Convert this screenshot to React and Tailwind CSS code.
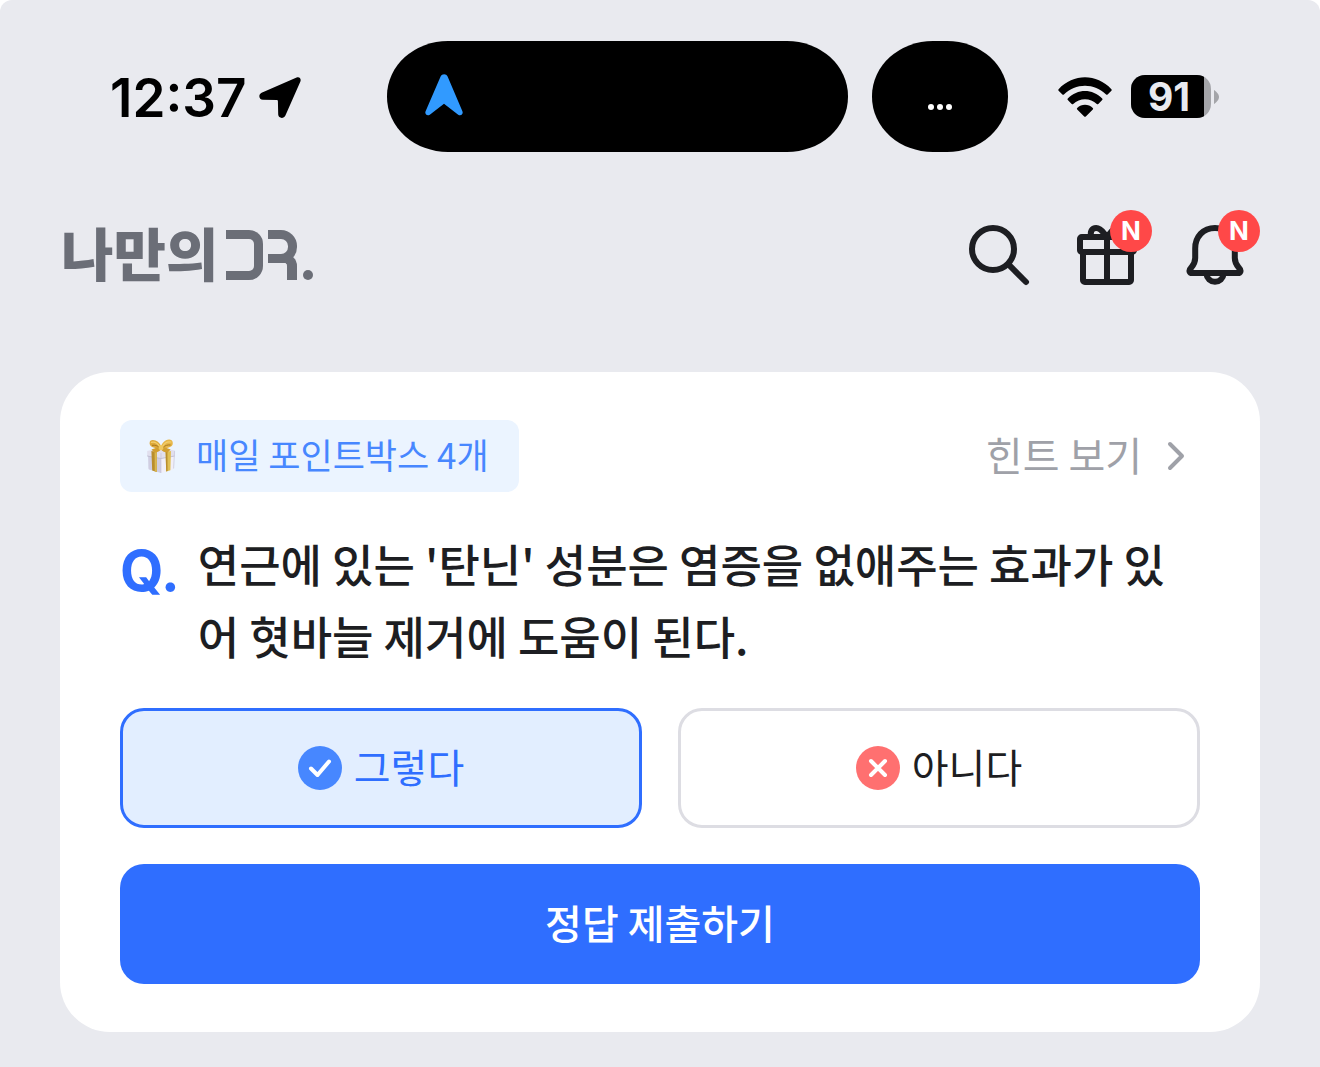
import React, { useState } from "react";

// Iconos de la barra de estado
const LocationIcon = () => (
  <svg viewBox="0 0 42 42" className="w-[42px] h-[42px]" fill="currentColor">
    <path d="M37.6 0.5C40.4 -0.6 42.4 1.6 41.4 4.4L26.4 38.6C24.9 42 19.4 41.6 19.2 37.6L18.9 24.2C18.9 23.4 18.4 22.9 17.6 22.9L4 22.8C-0.4 22.6 -0.8 17.2 2.6 15.7Z" />
  </svg>
);

const NavigationArrow = () => (
  <svg viewBox="0 0 38 42" className="w-[38px] h-[42px]" fill="#319aff">
    <path d="M15.6 2.4C17 -0.5 21.2 -0.5 22.6 2.4L37.4 37.2C38.6 40 36 42.4 33.2 40.8L19 29.8L4.8 40.8C2 42.4 -0.6 40 0.6 37.2Z" />
  </svg>
);

const WifiIcon = () => (
  <svg viewBox="0 0 54 40" className="w-[54px] h-10" fill="currentColor">
    <path d="M0.6 12.2C15.4 -3.6 38.6 -3.6 53.4 12.2C53.9 12.8 53.9 13.2 53.4 13.7L49.6 17.4C49.1 17.9 48.6 17.9 48.1 17.4C36.6 5.8 17.4 5.8 5.9 17.4C5.4 17.9 4.9 17.9 4.4 17.4L0.6 13.7C0.1 13.2 0.1 12.8 0.6 12.2Z" />
    <path d="M9.8 21.6C19.4 11.6 34.6 11.6 44.2 21.6C44.7 22.1 44.7 22.6 44.2 23.1L40.3 26.9C39.8 27.4 39.3 27.4 38.8 26.9C32.4 20.6 21.6 20.6 15.2 26.9C14.7 27.4 14.2 27.4 13.7 26.9L9.8 23.1C9.3 22.6 9.3 22.1 9.8 21.6Z" />
    <path d="M19.2 31C23.6 26.8 30.4 26.8 34.8 31C35.3 31.5 35.3 32 34.8 32.5L27.8 39.4C27.3 39.9 26.7 39.9 26.2 39.4L19.2 32.5C18.7 32 18.7 31.5 19.2 31Z" />
  </svg>
);

const Battery = ({ level }) => (
  <div className="flex items-center gap-[3px]">
    <div className="relative flex items-center justify-center w-20 h-[43px]">
      <div className="absolute inset-0 rounded-[14px] overflow-hidden bg-[#a4a5a9]">
        <div className="h-full bg-black" style={{ width: `${level}%` }} />
      </div>
      <span className="relative pr-1 font-['Inter'] text-[39px] leading-[43px] font-bold text-[#e9eaef]">{level}</span>
    </div>
    <svg viewBox="0 0 5 14" className="w-[5px] h-[14px]" fill="#a4a5a9">
      <path d="M0 0C2 1.5 5 4 5 7C5 10 2 12.5 0 14Z" />
    </svg>
  </div>
);

const StatusBar = () => (
  <div className="grid grid-cols-[387fr_621fr_312fr] items-center pt-[41px] text-black">
    <div className="flex items-center gap-3 pt-[3px] pl-[110px]">
      <span className="font-['Inter'] text-[53px] leading-none font-semibold">12:37</span>
      <LocationIcon />
    </div>
    <div className="flex gap-6">
      <div className="flex-1 flex items-center h-[111px] pl-[38px] pb-1 rounded-[61px/55px] bg-black">
        <NavigationArrow />
      </div>
      <div className="flex items-center justify-center gap-[3px] w-[136px] h-[111px] pt-5 rounded-[61px/55px] bg-black">
        <span className="w-[6px] h-[6px] rounded-full bg-white" />
        <span className="w-[6px] h-[6px] rounded-full bg-white" />
        <span className="w-[6px] h-[6px] rounded-full bg-white" />
      </div>
    </div>
    <div className="flex items-center gap-[19px] pl-[50px]">
      <WifiIcon />
      <Battery level={91} />
    </div>
  </div>
);

const Logo = () => (
  <a href="#" aria-label="나만의 DR." className="flex items-center text-[#6b6e77]">
    <span className="pb-2 text-[57px] leading-[64px] font-black">나만의</span>
    <span className="flex items-end ml-2 h-[50px]">
      <span className="w-[37px] h-[50px] border-[9px] border-l-0 border-current rounded-r-[14px]" />
      <span className="flex flex-col ml-[5px] w-[29px]">
        <span className="h-[33px] border-[9px] border-l-0 border-current rounded-r-[16px]" />
        <span className="-mt-[9px] h-[26px] border-t-[9px] border-r-[10px] border-current rounded-tr-[12px]" />
      </span>
      <span className="ml-[6px] w-[10px] h-[10px] rounded-full bg-current" />
    </span>
  </a>
);

const SearchIcon = () => (
  <svg viewBox="0 0 24 24" className="w-[72px] h-[72px]" fill="none" stroke="currentColor" strokeWidth="2" strokeLinecap="round">
    <circle cx="10" cy="10" r="7" />
    <path d="M15.4 15.4L21 21" />
  </svg>
);

const GiftIcon = () => (
  <svg viewBox="0 0 24 24" className="w-[72px] h-[72px]" fill="none" stroke="currentColor" strokeWidth="2" strokeLinejoin="round">
    <rect x="3" y="6" width="18" height="5" rx="0.6" />
    <path d="M4 11V20.4A0.6 0.6 0 0 0 4.6 21H19.4A0.6 0.6 0 0 0 20 20.4V11M12 6V21" />
    <path d="M6.8 6C6.2 4.2 7 3 8.4 3C10.2 3 10.8 4.8 12 6C13.2 4.8 13.8 3 15.6 3C17 3 17.8 4.2 17.2 6" />
  </svg>
);

const BellIcon = () => (
  <svg viewBox="0 0 24 24" className="w-[72px] h-[72px]" fill="none" stroke="currentColor" strokeWidth="2" strokeLinejoin="round">
    <path d="M12 3C8 3 5.4 6 5.4 9.8V13C5.4 14.4 5 15.2 4 16.3C3.1 17.2 3.5 18 4.4 18H19.6C20.5 18 20.9 17.2 20 16.3C19 15.2 18.6 14.4 18.6 13V9.8C18.6 6 16 3 12 3Z" />
    <path d="M9.1 18.2C9.3 19.8 10.5 20.9 12 20.9C13.5 20.9 14.7 19.8 14.9 18.2" />
  </svg>
);

const IconButton = ({ label, badge, children }) => (
  <button type="button" aria-label={label} className="relative">
    {children}
    {badge && (
      <span className="absolute -top-[9px] -right-[9px] flex items-center justify-center w-[42px] h-[42px] rounded-full bg-[#ff4848] font-['Inter'] text-[26px] leading-none font-bold text-white">
        {badge}
      </span>
    )}
  </button>
);

// Caja de regalo de la etiqueta de puntos
const GiftBox = () => (
  <svg viewBox="0 0 30 36" className="w-[30px] h-9">
    <path d="M2 13L15 15V35L3 31.5Q2.4 31 2.4 30Z" fill="#d0cee2" />
    <path d="M15 15L28.5 13L27.6 30Q27.6 31 26.6 31.5L15 35Z" fill="#f1eff8" />
    <path d="M1.2 13L14 10L28.8 12.5V18L15 20.5L1.2 18Z" fill="#e1dfee" />
    <path d="M1.2 18L15 20.5L28.8 18" stroke="#b9b7cd" strokeWidth="0.8" fill="none" />
    <path d="M15 15V35" stroke="#c2c0d6" strokeWidth="0.6" />
    <path d="M28.6 13L27.6 30.5" stroke="#cbc9dc" strokeWidth="0.8" />
    <path d="M5.4 13L10.8 14V34L6.2 32.6Z" fill="#b98e2e" />
    <path d="M8.6 13.6L10.8 14V34L8.8 33.4Z" fill="#d9b752" />
    <path d="M19.6 14L25 13L24.4 32.2L20.2 33.6Z" fill="#e0bf55" />
    <path d="M19.6 14L21.4 13.6L21.6 33.1L20.2 33.6Z" fill="#b98e2e" />
    <path d="M15 11C10 10 4 10 3.6 5.5C3.4 1.5 7 1.6 9.5 2.6C12.4 3.6 14.4 6 15 8.5Z" fill="#dda83a" />
    <path d="M15 11C20 10 27 10 26.8 5C26.6 1 22.6 1.2 20 2.2C17.4 3.4 15.6 6 15 8.5Z" fill="#e6b648" />
    <path d="M14 8.5L5.5 11.5L8.5 14.8C11.5 14.4 14 13 15 11.2C16.4 13.4 18.6 14.4 21.6 14.6L24.6 11.6L16.6 8.5Z" fill="#d29f30" />
    <path d="M5.4 4.4C8.6 3.6 11.6 5.4 13.4 8.4M25 4C21.6 3.4 18.4 5 16.8 8.2" stroke="#f3cf6c" strokeWidth="1.2" fill="none" strokeLinecap="round" />
    <path d="M6 7.4C9 6.8 11.4 7.6 13 9.4M24.6 7C21.4 6.6 19 7.6 17.2 9.4" stroke="#a9781d" strokeWidth="1" fill="none" />
    <ellipse cx="15" cy="9.6" rx="2.4" ry="2.6" fill="#efc75e" />
  </svg>
);

const ChevronRight = () => (
  <svg viewBox="0 0 48 48" className="w-12 h-12" fill="none" stroke="currentColor" strokeWidth="4" strokeLinecap="round" strokeLinejoin="round">
    <path d="M18 12L30 24L18 36" />
  </svg>
);

const CheckMark = () => (
  <svg viewBox="0 0 44 44" className="w-11 h-11">
    <circle cx="22" cy="22" r="22" fill="#4787ff" />
    <path d="M13 22.5L19.5 29L31 15.5" fill="none" stroke="white" strokeWidth="4" strokeLinecap="round" strokeLinejoin="round" />
  </svg>
);

const CrossMark = () => (
  <svg viewBox="0 0 44 44" className="w-11 h-11">
    <circle cx="22" cy="22" r="22" fill="#ff7070" />
    <path d="M15 15L29 29M29 15L15 29" fill="none" stroke="white" strokeWidth="4" strokeLinecap="round" />
  </svg>
);

const options = [
  { id: "yes", label: "그렇다", icon: <CheckMark /> },
  { id: "no", label: "아니다", icon: <CrossMark /> },
];

const App = () => {
  const [answer, setAnswer] = useState("yes");

  return (
    <div className="min-h-screen rounded-t-[12px] bg-[#e9eaef] pb-9 font-['Noto_Sans_CJK_KR',sans-serif] text-[#1d1e22]">
      <StatusBar />

      <header className="flex items-center justify-between mt-[67px] pl-[61px] pr-[69px]">
        <Logo />
        <div className="flex gap-9">
          <IconButton label="검색">
            <SearchIcon />
          </IconButton>
          <IconButton label="선물" badge="N">
            <GiftIcon />
          </IconButton>
          <IconButton label="알림" badge="N">
            <BellIcon />
          </IconButton>
        </div>
      </header>

      <main className="mt-[81px] mx-[60px] px-[60px] py-12 rounded-[50px] bg-white">
        <div className="flex items-center justify-between">
          <div className="flex items-center gap-5 h-[72px] pl-[26px] pr-[30px] rounded-xl bg-[#ebf4ff]">
            <GiftBox />
            <span className="pb-1 text-[35px] leading-[68px] text-[#4787ff]">매일 포인트박스 4개</span>
          </div>
          <a href="#" className="flex items-center gap-[10px] text-[#9fa1a8]">
            <span className="pb-1 text-[40px] leading-[68px]">힌트 보기</span>
            <ChevronRight />
          </a>
        </div>

        {/* Pregunta */}
        <div className="flex gap-[18px] mt-9 pr-5">
          <span className="font-['Inter'] text-[56px] leading-[86px] font-bold text-[#2f6eff]">Q.</span>
          <p className="text-[45px] leading-[72px] font-medium">
            연근에 있는 '탄닌' 성분은 염증을 없애주는 효과가 있어 혓바늘 제거에 도움이 된다.
          </p>
        </div>

        {/* Respuestas */}
        <div className="grid grid-cols-2 gap-9 mt-9">
          {options.map((option) => (
            <button
              key={option.id}
              type="button"
              aria-pressed={answer === option.id}
              onClick={() => setAnswer(option.id)}
              className={`flex items-center justify-center gap-3 h-[120px] border-[3px] rounded-3xl text-[40px] ${
                answer === option.id
                  ? "border-[#2f6eff] bg-[#e2eeff] text-[#2f6eff]"
                  : "border-[#dddde3] bg-white text-[#1d1e22]"
              }`}
            >
              {option.icon}
              <span className="pb-1">{option.label}</span>
            </button>
          ))}
        </div>

        <button type="button" className="w-full h-[120px] mt-9 pb-1 rounded-3xl bg-[#2f6eff] text-[40px] font-medium text-white">
          정답 제출하기
        </button>
      </main>
    </div>
  );
};

export default App;
